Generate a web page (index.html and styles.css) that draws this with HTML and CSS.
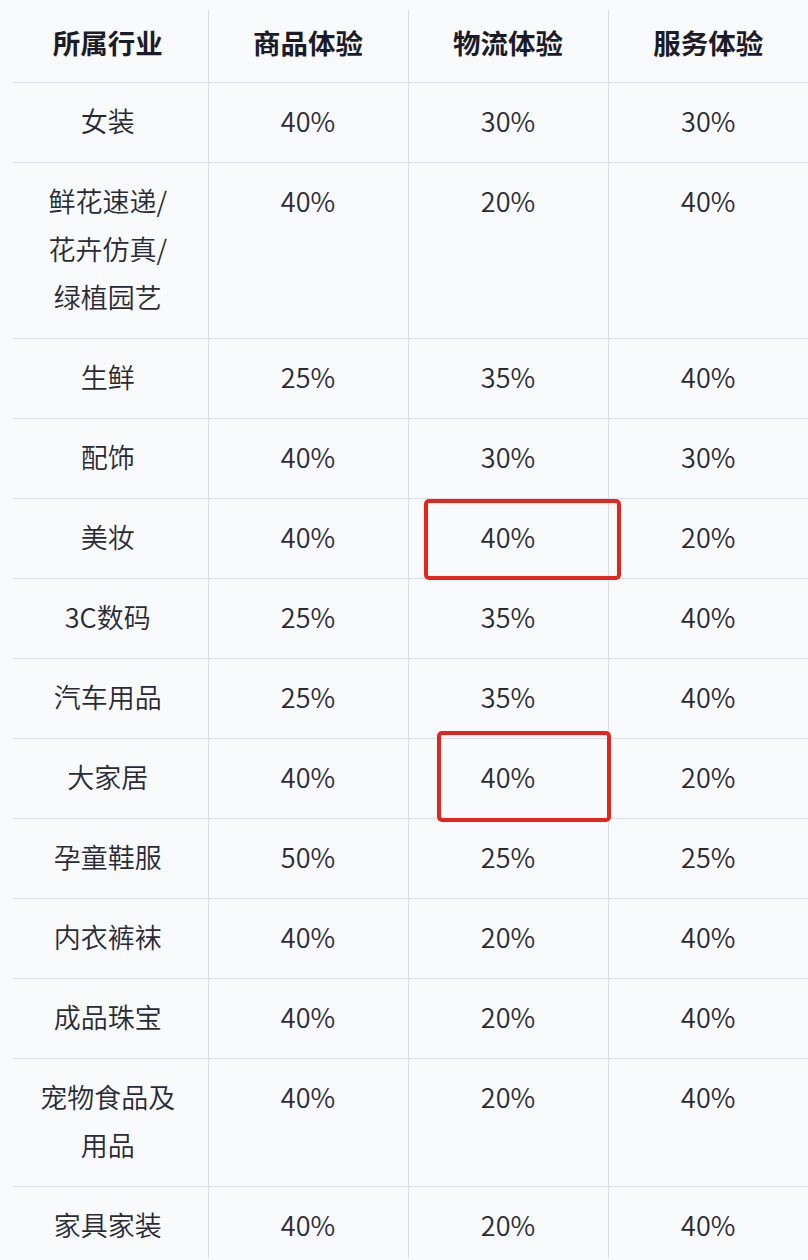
FILE: index.html
```html
<!DOCTYPE html>
<html lang="zh-CN">
<head>
<meta charset="utf-8">
<title>行业评分权重</title>
<link rel="stylesheet" href="styles.css">
</head>
<body>
<div class="page">
  <table class="rates">
    <colgroup>
      <col class="c-ind">
      <col class="c-val">
      <col class="c-val">
      <col class="c-val">
    </colgroup>
    <thead>
      <tr><th class="ind">所属行业</th><th>商品体验</th><th>物流体验</th><th>服务体验</th></tr>
    </thead>
    <tbody>
      <tr><td class="ind">女装</td><td>40%</td><td>30%</td><td>30%</td></tr>
      <tr><td class="ind">鲜花速递/<br>花卉仿真/<br>绿植园艺</td><td>40%</td><td>20%</td><td>40%</td></tr>
      <tr><td class="ind">生鲜</td><td>25%</td><td>35%</td><td>40%</td></tr>
      <tr><td class="ind">配饰</td><td>40%</td><td>30%</td><td>30%</td></tr>
      <tr><td class="ind">美妆</td><td>40%</td><td>40%</td><td>20%</td></tr>
      <tr><td class="ind">3C数码</td><td>25%</td><td>35%</td><td>40%</td></tr>
      <tr><td class="ind">汽车用品</td><td>25%</td><td>35%</td><td>40%</td></tr>
      <tr><td class="ind">大家居</td><td>40%</td><td>40%</td><td>20%</td></tr>
      <tr><td class="ind">孕童鞋服</td><td>50%</td><td>25%</td><td>25%</td></tr>
      <tr><td class="ind">内衣裤袜</td><td>40%</td><td>20%</td><td>40%</td></tr>
      <tr><td class="ind">成品珠宝</td><td>40%</td><td>20%</td><td>40%</td></tr>
      <tr><td class="ind">宠物食品及<br>用品</td><td>40%</td><td>20%</td><td>40%</td></tr>
      <tr><td class="ind">家具家装</td><td>40%</td><td>20%</td><td>40%</td></tr>
    </tbody>
  </table>
  <div class="mark mark-a"></div>
  <div class="mark mark-b"></div>
</div>
</body>
</html>
```

FILE: styles.css
```css
html, body {
  margin: 0;
  padding: 0;
  background: #f9fafc;
}

body {
  font-family: "Noto Sans CJK SC", "Noto Sans", sans-serif;
  color: #2a2a35;
  overflow: hidden;
}

.page {
  position: relative;
  width: 808px;
  height: 1260px;
  box-sizing: border-box;
  padding: 10px 0 0 13px;
  border-top: 2px solid #eff0f4;
  margin-top: -2px;
}

.rates {
  border-collapse: collapse;
  table-layout: fixed;
  width: 795px;
}

.c-ind { width: 195px; }
.c-val { width: 200px; }

.rates th,
.rates td {
  text-align: center;
  vertical-align: top;
  font-size: 27px;
  line-height: 48px;
  padding: 14px 0 17px;
  border-bottom: 1px solid #dadce3;
  border-left: 1px solid #dadce3;
}

.rates th {
  font-weight: 700;
  color: #1c1c28;
  padding: 8px 0 16px;
  font-size: 27.5px;
}

.rates td {
  font-weight: 350;
}

.rates .ind {
  border-left: none;
  padding-right: 5px;
}

.mark {
  position: absolute;
  box-sizing: border-box;
  border: 4.5px solid #e5241e;
  border-radius: 5px;
}

.mark-a {
  left: 424px;
  top: 499px;
  width: 197px;
  height: 81px;
}

.mark-b {
  left: 437px;
  top: 731px;
  width: 174px;
  height: 91px;
}
```
